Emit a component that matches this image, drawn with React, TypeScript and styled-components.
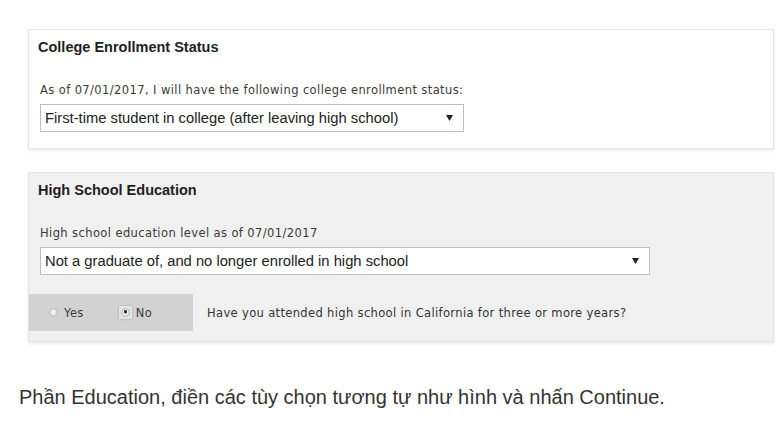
import styled, { createGlobalStyle } from 'styled-components';

const GlobalStyle = createGlobalStyle`
  html, body {
    margin: 0;
    padding: 0;
    background: #ffffff;
  }
  body {
    font-family: "Liberation Sans", Arial, sans-serif;
  }
`;

const Page = styled.div`
  width: 778px;
  height: 430px;
  padding: 29px 0 0 28px;
  box-sizing: border-box;
  display: flex;
  flex-direction: column;
`;

const Card = styled.section<{ tone?: 'white' | 'grey' }>`
  width: 746px;
  box-sizing: border-box;
  background-color: ${props => props.tone === 'grey' ? '#f0f0f0' : '#ffffff'};
  border: 1px solid #e4e4e4;
  box-shadow: 0 2px 3px rgba(0, 0, 0, 0.08);
  padding: 8px 0 0 0;
  display: flex;
  flex-direction: column;
  & + & {
    margin-top: 23px;
  }
`;

const Title = styled.h3`
  margin: 0 0 0 9px;
  font-family: "Liberation Sans", Arial, sans-serif;
  font-size: 14.5px;
  line-height: 18px;
  font-weight: bold;
  color: #1e1e1e;
`;

const Field = styled.div<{ wide?: boolean }>`
  margin: 27px 0 0 11px;
  display: flex;
  flex-direction: column;
  gap: 7px;
  width: ${props => props.wide ? '610px' : '424px'};
`;

const verdana = `
  font-family: "DejaVu Sans", Verdana, sans-serif;
  font-size: 11.5px;
  letter-spacing: 0.4px;
  white-space: nowrap;
`;

const Label = styled.label`
  ${verdana}
  line-height: 14px;
  color: #3a3a3a;
`;

const Select = styled.div`
  height: 28px;
  box-sizing: border-box;
  border: 1px solid #b9bec7;
  background: #ffffff;
  display: flex;
  align-items: center;
  justify-content: space-between;
  padding: 0 10px 0 4px;
  font-family: "Liberation Sans", Arial, sans-serif;
  font-size: 14.75px;
  color: #222;
`;

const Arrow = () => (
  <svg width="7" height="6" viewBox="0 0 7 6">
    <path d="M0 0 L7 0 L3.5 6 Z" fill="#222" />
  </svg>
);

const Bottom = styled.div<{ pad: number }>`
  height: ${props => props.pad}px;
`;

const RadioRow = styled.div`
  margin-top: 19px;
  display: flex;
  align-items: center;
`;

const RadioBand = styled.div`
  width: 164px;
  height: 37px;
  background: #d2d2d2;
  display: flex;
  align-items: center;
  padding-left: 18px;
  box-sizing: border-box;
`;

const Option = styled.span<{ gap: number }>`
  display: flex;
  align-items: center;
  margin-right: ${props => props.gap}px;
  ${verdana}
  color: #3a3a3a;
`;

const Focus = styled.span<{ on?: boolean }>`
  width: 13px;
  height: 13px;
  display: flex;
  align-items: center;
  justify-content: center;
  margin-right: 4px;
  background: ${props => props.on ? '#e4e4e4' : 'transparent'};
  box-shadow: ${props => props.on ? '0 0 2px rgba(0,0,0,0.25)' : 'none'};
`;

const Dot = styled.span<{ checked?: boolean }>`
  width: 9px;
  height: 9px;
  border-radius: 50%;
  box-sizing: border-box;
  border: 1px solid #b8b8b8;
  background: radial-gradient(circle at 50% 40%, ${props => props.checked ? '#333 0, #333 1.5px, #f2f2f2 2px' : '#f7f7f7 0'}, #d6d6d6 100%);
`;

const Question = styled.span`
  margin-left: 14px;
  ${verdana}
  letter-spacing: 0.35px;
  color: #333;
`;

const Caption = styled.p`
  margin: 44px 0 0 -9px;
  font-family: "Liberation Sans", Arial, sans-serif;
  font-size: 20px;
  line-height: 22px;
  color: #333333;
`;

export default function App() {
  return (
    <>
      <GlobalStyle />
      <Page>
        <Card>
          <Title>College Enrollment Status</Title>
          <Field>
            <Label>As of 07/01/2017, I will have the following college enrollment status:</Label>
            <Select>
              <span>First-time student in college (after leaving high school)</span>
              <Arrow />
            </Select>
          </Field>
          <Bottom pad={16} />
        </Card>
        <Card tone="grey">
          <Title>High School Education</Title>
          <Field wide>
            <Label>High school education level as of 07/01/2017</Label>
            <Select>
              <span>Not a graduate of, and no longer enrolled in high school</span>
              <Arrow />
            </Select>
          </Field>
          <RadioRow>
            <RadioBand>
              <Option gap={35}>
                <Focus><Dot /></Focus>
                Yes
              </Option>
              <Option gap={0}>
                <Focus on><Dot checked /></Focus>
                No
              </Option>
            </RadioBand>
            <Question>Have you attended high school in California for three or more years?</Question>
          </RadioRow>
          <Bottom pad={10} />
        </Card>
        <Caption>Phần Education, điền các tùy chọn tương tự như hình và nhấn Continue.</Caption>
      </Page>
    </>
  );
}
